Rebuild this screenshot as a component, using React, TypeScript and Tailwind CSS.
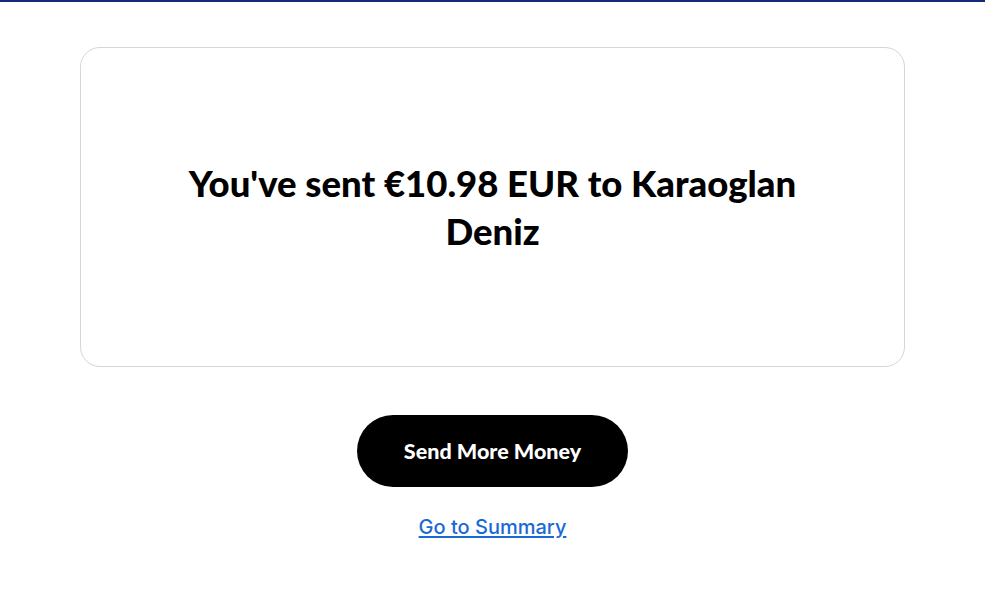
export default function App() {
  return (
    <div className="min-h-[606px] bg-white" style={{ fontFamily: "Lato, 'Liberation Sans', sans-serif" }}>
      <div className="h-[2px] bg-[#14297e]" />
      <div className="pt-[45px] flex flex-col items-center">
        <div className="w-[825px] h-[320px] rounded-[20px] border border-[#d6d6d6] flex items-center justify-center">
          <h1 className="w-[660px] text-center text-[36.5px] leading-[48px] font-black text-black">
            You've sent €10.98 EUR to Karaoglan Deniz
          </h1>
        </div>
        <button className="mt-[48px] w-[271px] h-[72px] rounded-full bg-black text-white text-[21.5px] font-black">
          Send More Money
        </button>
        <a href="#" className="mt-[25px] text-[20px] text-[#1a6ad3] underline underline-offset-2 font-medium" style={{ fontFamily: "Inter, sans-serif" }}>
          Go to Summary
        </a>
      </div>
    </div>
  );
}
